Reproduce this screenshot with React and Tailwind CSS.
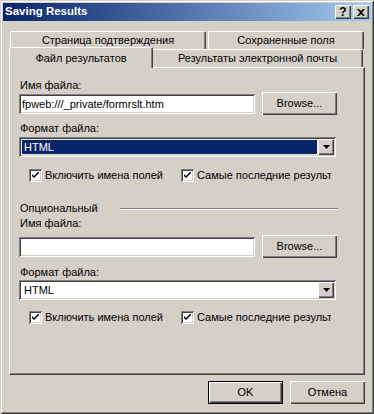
import React from "react";

const raised =
  "shadow-[inset_1px_1px_#ffffff,inset_-1px_-1px_#404040,inset_-2px_-2px_#808080]";
const sunken =
  "shadow-[inset_1px_1px_#808080,inset_-1px_-1px_#ffffff,inset_2px_2px_#404040,inset_-2px_-2px_#d4d0c8]";

function Check({ label }) {
  return (
    <div className="flex items-center gap-[3px] overflow-hidden whitespace-nowrap">
      <div className={`w-[13px] h-[13px] shrink-0 bg-white flex items-center justify-center ${sunken}`}>
        <svg width="7" height="7" viewBox="0 0 7 7">
          <path d="M0 2 L0 4 L2 6 L7 1 L7 -1 L2 4 Z" fill="#000" />
        </svg>
      </div>
      <span className="leading-[13px]">{label}</span>
    </div>
  );
}

function Browse() {
  return (
    <button className={`w-[75px] h-[23px] bg-[#d4d0c8] ${raised} text-[11px] leading-[13px]`}>
      Browse...
    </button>
  );
}

function Select({ active }) {
  return (
    <div className={`w-[317px] h-[20px] bg-white p-[2px] flex ${sunken}`}>
      <div className="flex-1 p-[1px]">
        <div
          className={`h-full pl-[2px] leading-[14px] ${
            active ? "bg-[#0a246a] text-white outline-1 outline-dotted outline-[#d4d0c8]" : ""
          }`}
        >
          HTML
        </div>
      </div>
      <div className={`w-[16px] h-[16px] bg-[#d4d0c8] flex items-center justify-center ${raised}`}>
        <svg width="7" height="4" viewBox="0 0 7 4">
          <path d="M0 0 H7 L3.5 4 Z" fill="#000" />
        </svg>
      </div>
    </div>
  );
}

function FileRow({ value }) {
  return (
    <div className="flex items-center gap-[7px] h-[23px]">
      <div className={`w-[236px] h-[20px] bg-white pl-[3px] leading-[20px] ${sunken}`}>{value}</div>
      <Browse />
    </div>
  );
}

function CheckRow() {
  return (
    <div className="flex">
      <div className="ml-[10px] w-[152px]">
        <Check label="Включить имена полей" />
      </div>
      <div className="w-[150px]">
        <Check label="Самые последние результаты" />
      </div>
    </div>
  );
}

export default function App() {
  return (
    <div className="w-[374px] h-[414px] bg-[#d4d0c8] p-[3px] text-[11px] text-black font-['Liberation_Sans',Arial,sans-serif] shadow-[inset_1px_1px_#d4d0c8,inset_-1px_-1px_#404040,inset_2px_2px_#ffffff,inset_-2px_-2px_#808080] flex flex-col">
      {/* title bar */}
      <div className="h-[18px] bg-gradient-to-r from-[#0a246a] to-[#a6caf0] flex items-center justify-between pl-[2px] pr-[2px]">
        <span className="text-white font-bold text-[11.5px]">Saving Results</span>
        <div className="flex gap-[2px]">
          <div className={`w-[16px] h-[14px] bg-[#d4d0c8] flex items-center justify-center font-bold text-[12px] leading-none ${raised}`}>?</div>
          <div className={`w-[16px] h-[14px] bg-[#d4d0c8] flex items-center justify-center ${raised}`}>
            <svg width="8" height="7" viewBox="0 0 8 7">
              <path d="M0 0 L2 0 L4 2 L6 0 L8 0 L5 3.5 L8 7 L6 7 L4 5 L2 7 L0 7 L3 3.5 Z" fill="#000" />
            </svg>
          </div>
        </div>
      </div>

      {/* tabs back row */}
      <div className="mt-[10px] ml-[7px] flex gap-[2px] h-[18px]">
        <div className="w-[196px] h-[18px] border-t border-l border-white border-r border-r-[#404040] rounded-t-[2px] shadow-[inset_-1px_0_#808080] flex items-center justify-center">
          Страница подтверждения
        </div>
        <div className="w-[156px] h-[18px] border-t border-l border-white border-r border-r-[#404040] rounded-t-[2px] shadow-[inset_-1px_0_#808080] flex items-center justify-center">
          Сохраненные поля
        </div>
      </div>

      {/* tabs front row */}
      <div className="-mt-[2px] ml-[6px] flex items-start h-[20px] relative z-10">
        <div className="w-[144px] h-[21px] bg-[#d4d0c8] border-t border-l border-white border-r border-r-[#404040] rounded-t-[2px] shadow-[inset_-1px_0_#808080] flex justify-center pt-[2px]">
          Файл результатов
        </div>
        <div className="mt-[2px] w-[210px] h-[18px] border-t border-white border-r border-r-[#404040] rounded-tr-[2px] shadow-[inset_-1px_0_#808080] flex items-center justify-center">
          Результаты электронной почты
        </div>
      </div>

      {/* panel */}
      <div className="ml-[6px] w-[356px] h-[308px] border-t border-l border-white border-r border-b border-r-[#404040] border-b-[#404040] shadow-[inset_-1px_-1px_#808080] pl-[9px] flex flex-col">
        <div className="mt-[11px] leading-[13px] pl-[1px]">Имя файла:</div>
        <FileRow value="fpweb:///_private/formrslt.htm" />
        <div className="mt-[7px] leading-[13px] pl-[1px]">Формат файла:</div>
        <div className="mt-[2px]">
          <Select active />
        </div>
        <div className="mt-[12px]">
          <CheckRow />
        </div>

        <div className="mt-[20px] flex items-center">
          <span className="leading-[13px] pl-[1px]">Опциональный</span>
          <div className="ml-[22px] w-[218px] h-[2px] border-t border-[#808080] border-b border-b-white" />
        </div>
        <div className="mt-[2px] leading-[13px] pl-[1px]">Имя файла:</div>
        <div className="mt-[5px]">
          <FileRow value="" />
        </div>
        <div className="mt-[8px] leading-[13px] pl-[1px]">Формат файла:</div>
        <div className="mt-[1px]">
          <Select />
        </div>
        <div className="mt-[11px]">
          <CheckRow />
        </div>
      </div>

      {/* buttons */}
      <div className="mt-[6px] flex justify-end gap-[7px] pr-[6px]">
        <button className="w-[75px] h-[23px] bg-[#d4d0c8] border border-black shadow-[inset_1px_1px_#ffffff,inset_-1px_-1px_#404040,inset_-2px_-2px_#808080]">
          OK
        </button>
        <button className={`w-[75px] h-[23px] bg-[#d4d0c8] ${raised}`}>Отмена</button>
      </div>
    </div>
  );
}
